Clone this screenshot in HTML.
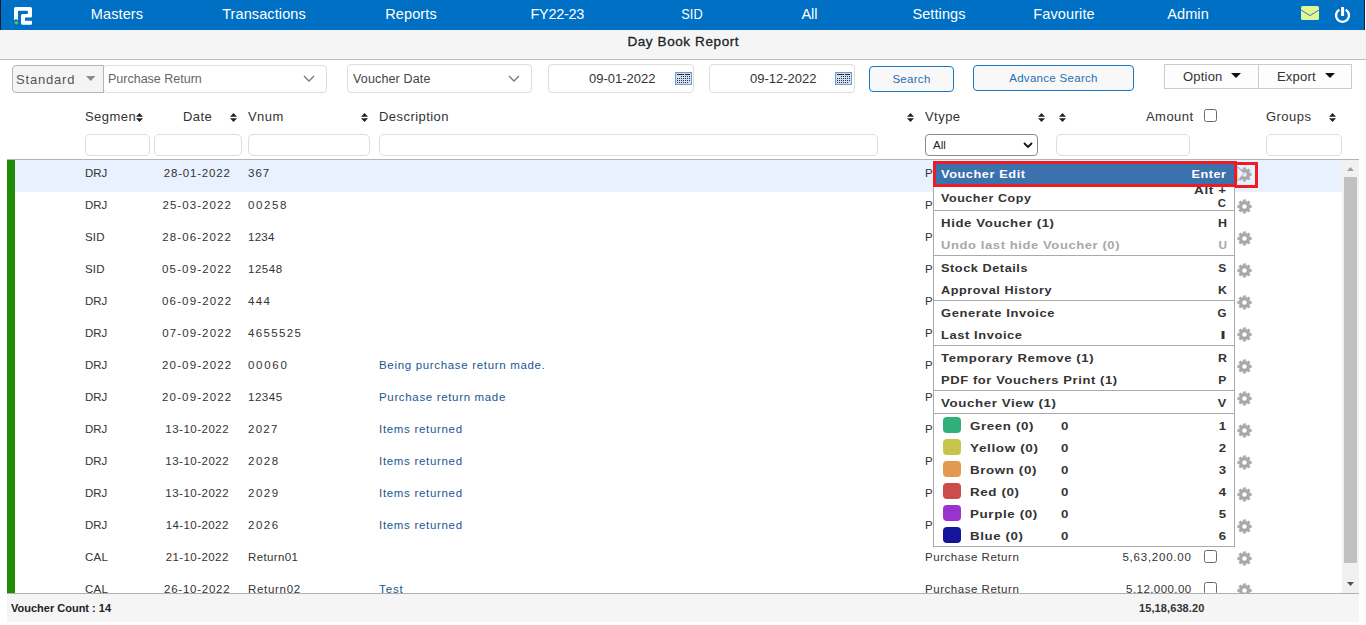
<!DOCTYPE html>
<html>
<head>
<meta charset="utf-8">
<title>Day Book Report</title>
<style>
*{box-sizing:border-box;margin:0;padding:0}
html,body{width:1366px;height:625px;overflow:hidden;background:#fff;font-family:"Liberation Sans",sans-serif;color:#333}
.abs{position:absolute}
#nav{position:absolute;left:0;top:0;width:1366px;height:30px;background:#0070c4}
#nav .edge{position:absolute;left:0;top:0;width:1px;height:30px;background:#1a1a2a}
#nav .item{position:absolute;top:6px;color:#fff;font-size:14.5px;line-height:17px;white-space:nowrap;transform:translateX(-50%);letter-spacing:.1px}
#title{position:absolute;left:0;top:30px;width:1366px;height:30px;background:#f5f5f5;border-bottom:1px solid #bdbdbd}
#title span{position:absolute;left:0;width:1366px;text-align:center;top:4px;font-size:13.5px;line-height:15px;font-weight:normal;color:#222;letter-spacing:.6px;-webkit-text-stroke:.3px #222;text-indent:.6px}
.box{position:absolute;border:1px solid #ddd;border-radius:4px;background:#fff}
.txt{position:absolute;white-space:nowrap;font-size:12.5px;line-height:15px;color:#444}
.hdr{position:absolute;top:109px;font-size:13px;line-height:15px;color:#333;white-space:nowrap;letter-spacing:.45px}
.sort{position:absolute;top:113px;width:7px;height:9px;margin-left:-.5px}
.finp{position:absolute;top:134px;height:22px;border:1px solid #ddd;border-radius:5px;background:#fff}
#grid{position:absolute;left:7px;top:159px;width:1352px;height:435px;overflow:hidden;border-top:1px solid #b4b4b4}
#grid .bar{position:absolute;left:0;top:0;width:8px;height:435px;background:#218a06}
.row{position:absolute;left:8px;width:1327px;height:32px}
.row.sel{background:#e9f1fe}
.c{position:absolute;top:6px;font-size:11.5px;line-height:14px;color:#333;white-space:nowrap}
.c.d{color:#1b5690}
.c.date{width:80px;text-align:center;text-indent:.4px}
.c.amt{text-align:right}
.cb{position:absolute;width:13px;height:13px;border:1px solid #6b6b6b;border-radius:2.5px;background:#fff}
.gear{position:absolute;width:15px;height:15px}
#foot{position:absolute;left:7px;top:593px;width:1352px;height:29px;background:#f5f5f5;border-top:1px solid #b0b0b0}
#foot span{position:absolute;top:8px;font-size:11px;line-height:13px;font-weight:bold;color:#333;white-space:nowrap}
#sb{position:absolute;left:1342px;top:160px;width:17px;height:433px;background:#f1f1f1}
#sb .th{position:absolute;left:2px;top:17px;width:13px;height:386px;background:#c1c1c1}
#menubox{position:absolute;left:933px;top:162px;width:302px;height:385px;background:#fff;border:1px solid #aaa}
#menu{position:absolute;left:0;top:0;font-weight:bold;font-size:11px;color:#333;letter-spacing:.5px}
#menu .mi{position:absolute;left:934px;width:300px;white-space:nowrap;line-height:14px}
#menu .mi .l{position:absolute;left:7px;top:5px;transform-origin:0 50%;display:inline-block}
#menu .mi .r{position:absolute;right:7px;top:5px;text-align:right;transform-origin:100% 50%;display:inline-block}
#menu .mi.sel{background:#3b71ad;color:#fff;left:936px;width:298px}
#menu .mi.sel .l{left:5px;top:3px}
#menu .mi.sel .r{top:3px}
#menu .mi.two .r{top:-3px;line-height:13px}
#menu .mi.two .r i{font-style:normal;display:inline-block;transform:scaleX(.84);transform-origin:100% 50%}
#menu .mi.two .l{top:4px}
#menu .mi.dis{color:#a8a8a8}
#menu .mi.col .l{left:36px}
#menu .sep{position:absolute;left:934px;width:300px;height:1px;background:#aaa}
#menu .sw{position:absolute;left:9px;top:3px;width:18px;height:16px;border-radius:4px}
#menu .n{position:absolute;left:127.3px;top:5px;transform-origin:0 50%;display:inline-block}
.redbox{position:absolute;border:2px solid #ec1c24}
</style>
</head>
<body>
<div id="nav">
  <div class="edge"></div><div class="edge" style="left:1364px;width:1px"></div><div class="edge" style="left:1365px;width:1px;background:#fff"></div>
  <svg class="abs" style="left:14px;top:7px" width="18" height="18" viewBox="0 0 18 18">
    <path d="M0 13.2 V1.5 Q0 0 1.5 0 H16.5 Q18 0 18 1.5 V9.2 Q18 10.6 16.6 10.6 H11 V13.8 H17 Q18 13.8 18 14.8 V16.8 Q18 17.8 17 17.8 H8.5 Q7 17.8 7 16.3 V8.5 Q7 6.9 8.7 6.9 H12.9 Q13.9 6.9 13.9 5.9 V4.8 Q13.9 3.8 12.9 3.8 H5 Q4 3.8 4 4.8 V13.2 L2 11.9 Z" fill="#fff"/>
    <circle cx="2.4" cy="15.8" r="1.75" fill="#3ed630"/>
  </svg>
  <div class="item" style="left:117px">Masters</div>
  <div class="item" style="left:264px">Transactions</div>
  <div class="item" style="left:411px">Reports</div>
  <div class="item" style="left:557.3px;letter-spacing:-.3px">FY22-23</div>
  <div class="item" style="left:692px;transform:translateX(-50%) scaleX(.88)">SID</div>
  <div class="item" style="left:809.4px;letter-spacing:-.15px">All</div>
  <div class="item" style="left:939px">Settings</div>
  <div class="item" style="left:1064px">Favourite</div>
  <div class="item" style="left:1188px">Admin</div>
  <svg class="abs" style="left:1301px;top:5.7px" width="18" height="14" viewBox="0 0 18 14">
    <rect x="0" y="0" width="18" height="14" rx="1.6" fill="#e0f794"/>
    <path d="M0 4 L9 9.6 L18 4" fill="none" stroke="#3066b8" stroke-width="0.9"/>
  </svg>
  <svg class="abs" style="left:1334px;top:6px" width="18" height="18" viewBox="0 0 18 18">
    <path d="M5.3 3.7 A6.5 6.5 0 1 0 11.7 3.7" fill="none" stroke="#fff" stroke-width="2.4"/>
    <rect x="7.1" y="1" width="3" height="9" fill="#fff"/>
  </svg>
</div>
<div id="title"><span>Day Book Report</span></div>

<!-- filter row -->
<div class="box" style="left:103px;top:65px;width:224px;height:28px"></div>
<div class="box" style="left:12px;top:65px;width:92px;height:28px;background:#f4f4f4;border-color:#b5b5b5;border-radius:4px 0 0 4px"></div>
<div class="txt" style="left:16px;top:72px;font-size:13px;letter-spacing:.8px;color:#555">Standard</div>
<svg class="abs" style="left:85.5px;top:76px" width="9.5" height="5"><path d="M0 0 H9.5 L4.75 5 Z" fill="#8a8a8a"/></svg>
<div class="txt" style="left:108px;top:72px;color:#666">Purchase Return</div>
<svg class="abs" style="left:303px;top:75px" width="12" height="8"><path d="M1 1 L6 6 L11 1" fill="none" stroke="#777" stroke-width="1.3"/></svg>

<div class="box" style="left:347px;top:64px;width:185px;height:29px"></div>
<div class="txt" style="left:353px;top:72px;color:#444;letter-spacing:.15px">Voucher Date</div>
<svg class="abs" style="left:508px;top:75px" width="12" height="8"><path d="M1 1 L6 6 L11 1" fill="none" stroke="#777" stroke-width="1.3"/></svg>

<div class="box" style="left:548px;top:64px;width:146px;height:29px"></div>
<div class="txt" style="left:589px;top:71px;font-size:13px;color:#333">09-01-2022</div>
<svg class="abs cal" style="left:675px;top:72px" shape-rendering="crispEdges" width="17" height="13" viewBox="0 0 17 13"><rect x=".5" y=".5" width="16" height="12" fill="#cfdef2" stroke="#6f9bd0"/><path d="M2 2.5H9M10 2.5H15" stroke="#2a2a2a" stroke-width="1"/><path d="M6 4.5H15M2 6.5H15M2 8.5H15M2 10.5H13" stroke="#333" stroke-width="1" stroke-dasharray="1 1"/></svg>

<div class="box" style="left:709px;top:64px;width:146px;height:29px"></div>
<div class="txt" style="left:750px;top:71px;font-size:13px;color:#333">09-12-2022</div>
<svg class="abs cal" style="left:835px;top:72px" shape-rendering="crispEdges" width="17" height="13" viewBox="0 0 17 13"><rect x=".5" y=".5" width="16" height="12" fill="#cfdef2" stroke="#6f9bd0"/><path d="M2 2.5H9M10 2.5H15" stroke="#2a2a2a" stroke-width="1"/><path d="M6 4.5H15M2 6.5H15M2 8.5H15M2 10.5H13" stroke="#333" stroke-width="1" stroke-dasharray="1 1"/></svg>

<div class="box" style="left:869px;top:66px;width:85px;height:26px;border-color:#1a78c2;background:#f8f8f8"></div>
<div class="txt" style="left:869px;top:72px;width:85px;text-align:center;font-size:11.5px;color:#1f6fb4;letter-spacing:.3px">Search</div>
<div class="box" style="left:973px;top:65px;width:161px;height:26px;border-color:#1a78c2;background:#f8f8f8"></div>
<div class="txt" style="left:973px;top:71px;width:161px;text-align:center;font-size:11.5px;color:#1f6fb4;letter-spacing:.3px">Advance Search</div>

<div class="box" style="left:1164px;top:64px;width:95px;height:25px;border-radius:0;border-color:#ccc;background:#fdfdfd"></div>
<div class="box" style="left:1258px;top:64px;width:94px;height:25px;border-radius:0;border-color:#ccc;background:#fdfdfd"></div>
<div class="txt" style="left:1183px;top:69px;font-size:13px;color:#333;letter-spacing:.2px">Option</div>
<svg class="abs" style="left:1231px;top:73px" width="10" height="5"><path d="M0 0 H10 L5 5 Z" fill="#111"/></svg>
<div class="txt" style="left:1277px;top:69px;font-size:13px;color:#333;letter-spacing:.2px">Export</div>
<svg class="abs" style="left:1325px;top:73px" width="10" height="5"><path d="M0 0 H10 L5 5 Z" fill="#111"/></svg>

<!-- header row -->
<div class="hdr" style="left:85px">Segmen</div>
<div class="hdr" style="left:183px">Date</div>
<div class="hdr" style="left:248px">Vnum</div>
<div class="hdr" style="left:379px">Description</div>
<div class="hdr" style="left:925px">Vtype</div>
<div class="hdr" style="left:1146px">Amount</div>
<div class="hdr" style="left:1266px">Groups</div>
<svg class="sort" style="left:136px" viewBox="0 0 7 9"><path d="M3.5 0 L7 3.8 H0 Z M0 5.2 H7 L3.5 9 Z" fill="#222"/></svg>
<svg class="sort" style="left:230px" viewBox="0 0 7 9"><path d="M3.5 0 L7 3.8 H0 Z M0 5.2 H7 L3.5 9 Z" fill="#222"/></svg>
<svg class="sort" style="left:361px" viewBox="0 0 7 9"><path d="M3.5 0 L7 3.8 H0 Z M0 5.2 H7 L3.5 9 Z" fill="#222"/></svg>
<svg class="sort" style="left:907px" viewBox="0 0 7 9"><path d="M3.5 0 L7 3.8 H0 Z M0 5.2 H7 L3.5 9 Z" fill="#222"/></svg>
<svg class="sort" style="left:1038px" viewBox="0 0 7 9"><path d="M3.5 0 L7 3.8 H0 Z M0 5.2 H7 L3.5 9 Z" fill="#222"/></svg>
<svg class="sort" style="left:1059px" viewBox="0 0 7 9"><path d="M3.5 0 L7 3.8 H0 Z M0 5.2 H7 L3.5 9 Z" fill="#222"/></svg>
<svg class="sort" style="left:1329px" viewBox="0 0 7 9"><path d="M3.5 0 L7 3.8 H0 Z M0 5.2 H7 L3.5 9 Z" fill="#222"/></svg>
<div class="cb" style="left:1204px;top:109px"></div>

<div class="finp" style="left:85px;width:65px"></div>
<div class="finp" style="left:154px;width:88px"></div>
<div class="finp" style="left:248px;width:122px"></div>
<div class="finp" style="left:379px;width:499px"></div>
<div class="finp" style="left:925px;width:113px;border-color:#8a8a8a;border-radius:4px"></div>
<div class="txt" style="left:933px;top:138px;font-size:11.5px;color:#222">All</div>
<svg class="abs" style="left:1023px;top:142px" width="10" height="7"><path d="M1 1 L5 5 L9 1" fill="none" stroke="#111" stroke-width="1.8"/></svg>
<div class="finp" style="left:1056px;width:134px"></div>
<div class="finp" style="left:1266px;width:76px"></div>

<!-- grid -->
<div id="grid">
  <div class="bar"></div>
  <div class="row sel" style="top:0px"><div class="c" style="left:70px;letter-spacing:-0.037px">DRJ</div><div class="c date" style="left:142px;letter-spacing:0.808px">28-01-2022</div><div class="c" style="left:233px;letter-spacing:1.006px">367</div><div class="c" style="left:910px">P</div></div>
  <div class="row" style="top:32px"><div class="c" style="left:70px;letter-spacing:-0.037px">DRJ</div><div class="c date" style="left:142px;letter-spacing:1.064px">25-03-2022</div><div class="c" style="left:233px;letter-spacing:1.579px">00258</div><div class="c" style="left:910px">P</div></div>
  <div class="row" style="top:64px"><div class="c" style="left:70px;letter-spacing:0.164px">SID</div><div class="c date" style="left:142px;letter-spacing:1.086px">28-06-2022</div><div class="c" style="left:233px;letter-spacing:0.235px">1234</div><div class="c" style="left:910px">P</div></div>
  <div class="row" style="top:96px"><div class="c" style="left:70px;letter-spacing:0.164px">SID</div><div class="c date" style="left:142px;letter-spacing:1.141px">05-09-2022</div><div class="c" style="left:233px;letter-spacing:0.529px">12548</div><div class="c" style="left:910px">P</div></div>
  <div class="row" style="top:128px"><div class="c" style="left:70px;letter-spacing:-0.037px">DRJ</div><div class="c date" style="left:142px;letter-spacing:1.141px">06-09-2022</div><div class="c" style="left:233px;letter-spacing:1.306px">444</div><div class="c" style="left:910px">P</div></div>
  <div class="row" style="top:160px"><div class="c" style="left:70px;letter-spacing:-0.037px">DRJ</div><div class="c date" style="left:142px;letter-spacing:1.108px">07-09-2022</div><div class="c" style="left:233px;letter-spacing:1.336px">4655525</div><div class="c" style="left:910px">P</div></div>
  <div class="row" style="top:192px"><div class="c" style="left:70px;letter-spacing:-0.037px">DRJ</div><div class="c date" style="left:142px;letter-spacing:1.141px">20-09-2022</div><div class="c" style="left:233px;letter-spacing:1.704px">00060</div><div class="c d" style="left:364px;letter-spacing:0.673px">Being purchase return made.</div><div class="c" style="left:910px">P</div></div>
  <div class="row" style="top:224px"><div class="c" style="left:70px;letter-spacing:-0.037px">DRJ</div><div class="c date" style="left:142px;letter-spacing:1.141px">20-09-2022</div><div class="c" style="left:233px;letter-spacing:0.529px">12345</div><div class="c d" style="left:364px;letter-spacing:0.658px">Purchase return made</div><div class="c" style="left:910px">P</div></div>
  <div class="row" style="top:256px"><div class="c" style="left:70px;letter-spacing:-0.037px">DRJ</div><div class="c date" style="left:142px;letter-spacing:0.497px">13-10-2022</div><div class="c" style="left:233px;letter-spacing:1.269px">2027</div><div class="c d" style="left:364px;letter-spacing:0.688px">Items returned</div><div class="c" style="left:910px">P</div></div>
  <div class="row" style="top:288px"><div class="c" style="left:70px;letter-spacing:-0.037px">DRJ</div><div class="c date" style="left:142px;letter-spacing:0.497px">13-10-2022</div><div class="c" style="left:233px;letter-spacing:1.502px">2028</div><div class="c d" style="left:364px;letter-spacing:0.688px">Items returned</div><div class="c" style="left:910px">P</div></div>
  <div class="row" style="top:320px"><div class="c" style="left:70px;letter-spacing:-0.037px">DRJ</div><div class="c date" style="left:142px;letter-spacing:0.497px">13-10-2022</div><div class="c" style="left:233px;letter-spacing:1.502px">2029</div><div class="c d" style="left:364px;letter-spacing:0.688px">Items returned</div><div class="c" style="left:910px">P</div></div>
  <div class="row" style="top:352px"><div class="c" style="left:70px;letter-spacing:-0.037px">DRJ</div><div class="c date" style="left:142px;letter-spacing:0.43px">14-10-2022</div><div class="c" style="left:233px;letter-spacing:1.502px">2026</div><div class="c d" style="left:364px;letter-spacing:0.688px">Items returned</div><div class="c" style="left:910px">P</div></div>
  <div class="row" style="top:384px"><div class="c" style="left:70px;letter-spacing:0.263px">CAL</div><div class="c date" style="left:142px;letter-spacing:0.43px">21-10-2022</div><div class="c" style="left:233px;letter-spacing:0.355px">Return01</div><div class="c" style="left:910px;letter-spacing:0.536px">Purchase Return</div><div class="c amt" style="right:150.4px;letter-spacing:0.763px">5,63,200.00</div><div class="cb" style="left:1189px;top:6px"></div></div>
  <div class="row" style="top:416px"><div class="c" style="left:70px;letter-spacing:0.263px">CAL</div><div class="c date" style="left:142px;letter-spacing:0.752px">26-10-2022</div><div class="c" style="left:233px;letter-spacing:0.698px">Return02</div><div class="c d" style="left:364px;letter-spacing:0.902px">Test</div><div class="c" style="left:910px;letter-spacing:0.536px">Purchase Return</div><div class="c amt" style="right:150.4px;letter-spacing:0.433px">5,12,000.00</div><div class="cb" style="left:1189px;top:6px"></div></div>
</div>

<!-- scrollbar -->
<div id="sb"><div class="th"></div>
<svg class="abs" style="left:5px;top:7px" width="7" height="4"><path d="M0 4 L3.5 0 L7 4 Z" fill="#a3a3a3"/></svg>
<svg class="abs" style="left:5px;top:422px" width="7" height="4"><path d="M0 0 H7 L3.5 4 Z" fill="#505050"/></svg>
</div>

<div id="foot"><span style="left:4px;color:#222">Voucher Count : 14</span><span style="left:1132px;color:#333;letter-spacing:.1px">15,18,638.20</span></div>

<!-- gears -->

<!-- context menu -->
<div class="abs" style="left:0;top:160px;width:1342px;height:433px;overflow:hidden">
<svg class="gear" style="left:1237.4px;top:6.7px" viewBox="0 0 16 16"><path d="M6.61 2.57 L6.75 0.71 L9.25 0.71 L9.39 2.57 L10.86 3.18 L12.27 1.96 L14.04 3.73 L12.82 5.14 L13.43 6.61 L15.29 6.75 L15.29 9.25 L13.43 9.39 L12.82 10.86 L14.04 12.27 L12.27 14.04 L10.86 12.82 L9.39 13.43 L9.25 15.29 L6.75 15.29 L6.61 13.43 L5.14 12.82 L3.73 14.04 L1.96 12.27 L3.18 10.86 L2.57 9.39 L0.71 9.25 L0.71 6.75 L2.57 6.61 L3.18 5.14 L1.96 3.73 L3.73 1.96 L5.14 3.18 Z M5.30 8.00 A2.7 2.7 0 1 0 10.70 8.00 A2.7 2.7 0 1 0 5.30 8.00 Z" fill="#a8a8a8" fill-rule="evenodd" stroke="#a8a8a8" stroke-width="0.6" stroke-linejoin="round"/></svg>
<svg class="gear" style="left:1237.4px;top:38.7px" viewBox="0 0 16 16"><path d="M6.61 2.57 L6.75 0.71 L9.25 0.71 L9.39 2.57 L10.86 3.18 L12.27 1.96 L14.04 3.73 L12.82 5.14 L13.43 6.61 L15.29 6.75 L15.29 9.25 L13.43 9.39 L12.82 10.86 L14.04 12.27 L12.27 14.04 L10.86 12.82 L9.39 13.43 L9.25 15.29 L6.75 15.29 L6.61 13.43 L5.14 12.82 L3.73 14.04 L1.96 12.27 L3.18 10.86 L2.57 9.39 L0.71 9.25 L0.71 6.75 L2.57 6.61 L3.18 5.14 L1.96 3.73 L3.73 1.96 L5.14 3.18 Z M5.30 8.00 A2.7 2.7 0 1 0 10.70 8.00 A2.7 2.7 0 1 0 5.30 8.00 Z" fill="#a8a8a8" fill-rule="evenodd" stroke="#a8a8a8" stroke-width="0.6" stroke-linejoin="round"/></svg>
<svg class="gear" style="left:1237.4px;top:70.7px" viewBox="0 0 16 16"><path d="M6.61 2.57 L6.75 0.71 L9.25 0.71 L9.39 2.57 L10.86 3.18 L12.27 1.96 L14.04 3.73 L12.82 5.14 L13.43 6.61 L15.29 6.75 L15.29 9.25 L13.43 9.39 L12.82 10.86 L14.04 12.27 L12.27 14.04 L10.86 12.82 L9.39 13.43 L9.25 15.29 L6.75 15.29 L6.61 13.43 L5.14 12.82 L3.73 14.04 L1.96 12.27 L3.18 10.86 L2.57 9.39 L0.71 9.25 L0.71 6.75 L2.57 6.61 L3.18 5.14 L1.96 3.73 L3.73 1.96 L5.14 3.18 Z M5.30 8.00 A2.7 2.7 0 1 0 10.70 8.00 A2.7 2.7 0 1 0 5.30 8.00 Z" fill="#a8a8a8" fill-rule="evenodd" stroke="#a8a8a8" stroke-width="0.6" stroke-linejoin="round"/></svg>
<svg class="gear" style="left:1237.4px;top:102.7px" viewBox="0 0 16 16"><path d="M6.61 2.57 L6.75 0.71 L9.25 0.71 L9.39 2.57 L10.86 3.18 L12.27 1.96 L14.04 3.73 L12.82 5.14 L13.43 6.61 L15.29 6.75 L15.29 9.25 L13.43 9.39 L12.82 10.86 L14.04 12.27 L12.27 14.04 L10.86 12.82 L9.39 13.43 L9.25 15.29 L6.75 15.29 L6.61 13.43 L5.14 12.82 L3.73 14.04 L1.96 12.27 L3.18 10.86 L2.57 9.39 L0.71 9.25 L0.71 6.75 L2.57 6.61 L3.18 5.14 L1.96 3.73 L3.73 1.96 L5.14 3.18 Z M5.30 8.00 A2.7 2.7 0 1 0 10.70 8.00 A2.7 2.7 0 1 0 5.30 8.00 Z" fill="#a8a8a8" fill-rule="evenodd" stroke="#a8a8a8" stroke-width="0.6" stroke-linejoin="round"/></svg>
<svg class="gear" style="left:1237.4px;top:134.7px" viewBox="0 0 16 16"><path d="M6.61 2.57 L6.75 0.71 L9.25 0.71 L9.39 2.57 L10.86 3.18 L12.27 1.96 L14.04 3.73 L12.82 5.14 L13.43 6.61 L15.29 6.75 L15.29 9.25 L13.43 9.39 L12.82 10.86 L14.04 12.27 L12.27 14.04 L10.86 12.82 L9.39 13.43 L9.25 15.29 L6.75 15.29 L6.61 13.43 L5.14 12.82 L3.73 14.04 L1.96 12.27 L3.18 10.86 L2.57 9.39 L0.71 9.25 L0.71 6.75 L2.57 6.61 L3.18 5.14 L1.96 3.73 L3.73 1.96 L5.14 3.18 Z M5.30 8.00 A2.7 2.7 0 1 0 10.70 8.00 A2.7 2.7 0 1 0 5.30 8.00 Z" fill="#a8a8a8" fill-rule="evenodd" stroke="#a8a8a8" stroke-width="0.6" stroke-linejoin="round"/></svg>
<svg class="gear" style="left:1237.4px;top:166.7px" viewBox="0 0 16 16"><path d="M6.61 2.57 L6.75 0.71 L9.25 0.71 L9.39 2.57 L10.86 3.18 L12.27 1.96 L14.04 3.73 L12.82 5.14 L13.43 6.61 L15.29 6.75 L15.29 9.25 L13.43 9.39 L12.82 10.86 L14.04 12.27 L12.27 14.04 L10.86 12.82 L9.39 13.43 L9.25 15.29 L6.75 15.29 L6.61 13.43 L5.14 12.82 L3.73 14.04 L1.96 12.27 L3.18 10.86 L2.57 9.39 L0.71 9.25 L0.71 6.75 L2.57 6.61 L3.18 5.14 L1.96 3.73 L3.73 1.96 L5.14 3.18 Z M5.30 8.00 A2.7 2.7 0 1 0 10.70 8.00 A2.7 2.7 0 1 0 5.30 8.00 Z" fill="#a8a8a8" fill-rule="evenodd" stroke="#a8a8a8" stroke-width="0.6" stroke-linejoin="round"/></svg>
<svg class="gear" style="left:1237.4px;top:198.7px" viewBox="0 0 16 16"><path d="M6.61 2.57 L6.75 0.71 L9.25 0.71 L9.39 2.57 L10.86 3.18 L12.27 1.96 L14.04 3.73 L12.82 5.14 L13.43 6.61 L15.29 6.75 L15.29 9.25 L13.43 9.39 L12.82 10.86 L14.04 12.27 L12.27 14.04 L10.86 12.82 L9.39 13.43 L9.25 15.29 L6.75 15.29 L6.61 13.43 L5.14 12.82 L3.73 14.04 L1.96 12.27 L3.18 10.86 L2.57 9.39 L0.71 9.25 L0.71 6.75 L2.57 6.61 L3.18 5.14 L1.96 3.73 L3.73 1.96 L5.14 3.18 Z M5.30 8.00 A2.7 2.7 0 1 0 10.70 8.00 A2.7 2.7 0 1 0 5.30 8.00 Z" fill="#a8a8a8" fill-rule="evenodd" stroke="#a8a8a8" stroke-width="0.6" stroke-linejoin="round"/></svg>
<svg class="gear" style="left:1237.4px;top:230.7px" viewBox="0 0 16 16"><path d="M6.61 2.57 L6.75 0.71 L9.25 0.71 L9.39 2.57 L10.86 3.18 L12.27 1.96 L14.04 3.73 L12.82 5.14 L13.43 6.61 L15.29 6.75 L15.29 9.25 L13.43 9.39 L12.82 10.86 L14.04 12.27 L12.27 14.04 L10.86 12.82 L9.39 13.43 L9.25 15.29 L6.75 15.29 L6.61 13.43 L5.14 12.82 L3.73 14.04 L1.96 12.27 L3.18 10.86 L2.57 9.39 L0.71 9.25 L0.71 6.75 L2.57 6.61 L3.18 5.14 L1.96 3.73 L3.73 1.96 L5.14 3.18 Z M5.30 8.00 A2.7 2.7 0 1 0 10.70 8.00 A2.7 2.7 0 1 0 5.30 8.00 Z" fill="#a8a8a8" fill-rule="evenodd" stroke="#a8a8a8" stroke-width="0.6" stroke-linejoin="round"/></svg>
<svg class="gear" style="left:1237.4px;top:262.7px" viewBox="0 0 16 16"><path d="M6.61 2.57 L6.75 0.71 L9.25 0.71 L9.39 2.57 L10.86 3.18 L12.27 1.96 L14.04 3.73 L12.82 5.14 L13.43 6.61 L15.29 6.75 L15.29 9.25 L13.43 9.39 L12.82 10.86 L14.04 12.27 L12.27 14.04 L10.86 12.82 L9.39 13.43 L9.25 15.29 L6.75 15.29 L6.61 13.43 L5.14 12.82 L3.73 14.04 L1.96 12.27 L3.18 10.86 L2.57 9.39 L0.71 9.25 L0.71 6.75 L2.57 6.61 L3.18 5.14 L1.96 3.73 L3.73 1.96 L5.14 3.18 Z M5.30 8.00 A2.7 2.7 0 1 0 10.70 8.00 A2.7 2.7 0 1 0 5.30 8.00 Z" fill="#a8a8a8" fill-rule="evenodd" stroke="#a8a8a8" stroke-width="0.6" stroke-linejoin="round"/></svg>
<svg class="gear" style="left:1237.4px;top:294.7px" viewBox="0 0 16 16"><path d="M6.61 2.57 L6.75 0.71 L9.25 0.71 L9.39 2.57 L10.86 3.18 L12.27 1.96 L14.04 3.73 L12.82 5.14 L13.43 6.61 L15.29 6.75 L15.29 9.25 L13.43 9.39 L12.82 10.86 L14.04 12.27 L12.27 14.04 L10.86 12.82 L9.39 13.43 L9.25 15.29 L6.75 15.29 L6.61 13.43 L5.14 12.82 L3.73 14.04 L1.96 12.27 L3.18 10.86 L2.57 9.39 L0.71 9.25 L0.71 6.75 L2.57 6.61 L3.18 5.14 L1.96 3.73 L3.73 1.96 L5.14 3.18 Z M5.30 8.00 A2.7 2.7 0 1 0 10.70 8.00 A2.7 2.7 0 1 0 5.30 8.00 Z" fill="#a8a8a8" fill-rule="evenodd" stroke="#a8a8a8" stroke-width="0.6" stroke-linejoin="round"/></svg>
<svg class="gear" style="left:1237.4px;top:326.7px" viewBox="0 0 16 16"><path d="M6.61 2.57 L6.75 0.71 L9.25 0.71 L9.39 2.57 L10.86 3.18 L12.27 1.96 L14.04 3.73 L12.82 5.14 L13.43 6.61 L15.29 6.75 L15.29 9.25 L13.43 9.39 L12.82 10.86 L14.04 12.27 L12.27 14.04 L10.86 12.82 L9.39 13.43 L9.25 15.29 L6.75 15.29 L6.61 13.43 L5.14 12.82 L3.73 14.04 L1.96 12.27 L3.18 10.86 L2.57 9.39 L0.71 9.25 L0.71 6.75 L2.57 6.61 L3.18 5.14 L1.96 3.73 L3.73 1.96 L5.14 3.18 Z M5.30 8.00 A2.7 2.7 0 1 0 10.70 8.00 A2.7 2.7 0 1 0 5.30 8.00 Z" fill="#a8a8a8" fill-rule="evenodd" stroke="#a8a8a8" stroke-width="0.6" stroke-linejoin="round"/></svg>
<svg class="gear" style="left:1237.4px;top:358.7px" viewBox="0 0 16 16"><path d="M6.61 2.57 L6.75 0.71 L9.25 0.71 L9.39 2.57 L10.86 3.18 L12.27 1.96 L14.04 3.73 L12.82 5.14 L13.43 6.61 L15.29 6.75 L15.29 9.25 L13.43 9.39 L12.82 10.86 L14.04 12.27 L12.27 14.04 L10.86 12.82 L9.39 13.43 L9.25 15.29 L6.75 15.29 L6.61 13.43 L5.14 12.82 L3.73 14.04 L1.96 12.27 L3.18 10.86 L2.57 9.39 L0.71 9.25 L0.71 6.75 L2.57 6.61 L3.18 5.14 L1.96 3.73 L3.73 1.96 L5.14 3.18 Z M5.30 8.00 A2.7 2.7 0 1 0 10.70 8.00 A2.7 2.7 0 1 0 5.30 8.00 Z" fill="#a8a8a8" fill-rule="evenodd" stroke="#a8a8a8" stroke-width="0.6" stroke-linejoin="round"/></svg>
<svg class="gear" style="left:1237.4px;top:390.7px" viewBox="0 0 16 16"><path d="M6.61 2.57 L6.75 0.71 L9.25 0.71 L9.39 2.57 L10.86 3.18 L12.27 1.96 L14.04 3.73 L12.82 5.14 L13.43 6.61 L15.29 6.75 L15.29 9.25 L13.43 9.39 L12.82 10.86 L14.04 12.27 L12.27 14.04 L10.86 12.82 L9.39 13.43 L9.25 15.29 L6.75 15.29 L6.61 13.43 L5.14 12.82 L3.73 14.04 L1.96 12.27 L3.18 10.86 L2.57 9.39 L0.71 9.25 L0.71 6.75 L2.57 6.61 L3.18 5.14 L1.96 3.73 L3.73 1.96 L5.14 3.18 Z M5.30 8.00 A2.7 2.7 0 1 0 10.70 8.00 A2.7 2.7 0 1 0 5.30 8.00 Z" fill="#a8a8a8" fill-rule="evenodd" stroke="#a8a8a8" stroke-width="0.6" stroke-linejoin="round"/></svg>
<svg class="gear" style="left:1237.4px;top:422.7px" viewBox="0 0 16 16"><path d="M6.61 2.57 L6.75 0.71 L9.25 0.71 L9.39 2.57 L10.86 3.18 L12.27 1.96 L14.04 3.73 L12.82 5.14 L13.43 6.61 L15.29 6.75 L15.29 9.25 L13.43 9.39 L12.82 10.86 L14.04 12.27 L12.27 14.04 L10.86 12.82 L9.39 13.43 L9.25 15.29 L6.75 15.29 L6.61 13.43 L5.14 12.82 L3.73 14.04 L1.96 12.27 L3.18 10.86 L2.57 9.39 L0.71 9.25 L0.71 6.75 L2.57 6.61 L3.18 5.14 L1.96 3.73 L3.73 1.96 L5.14 3.18 Z M5.30 8.00 A2.7 2.7 0 1 0 10.70 8.00 A2.7 2.7 0 1 0 5.30 8.00 Z" fill="#a8a8a8" fill-rule="evenodd" stroke="#a8a8a8" stroke-width="0.6" stroke-linejoin="round"/></svg>
</div>
<svg class="abs" style="left:1236px;top:165px" width="10" height="18" viewBox="0 0 10 18"><path d="M1 1 L8 8.5 L1 16.5 Z" fill="#eef1f8" stroke="#a9a9a9" stroke-width="1"/></svg>
<div id="menubox"></div>
<div id="menu">
<div class="mi sel" style="top:164px;height:20px"><span class="l" style="transform:scaleX(1.158)">Voucher Edit</span><span class="r" style="transform:scaleX(1.149)">Enter</span></div>
<div class="mi two" style="top:187px;height:23px"><span class="l" style="transform:scaleX(1.135)">Voucher Copy</span><span class="r" style="transform:scaleX(1.223)">Alt +<br><i>C</i></span></div>
<div class="mi " style="top:211px;height:22px"><span class="l" style="transform:scaleX(1.201)">Hide Voucher (1)</span><span class="r" style="transform:scaleX(1.132)">H</span></div>
<div class="mi dis" style="top:233px;height:22px"><span class="l" style="transform:scaleX(1.182)">Undo last hide Voucher (0)</span><span class="r" style="transform:scaleX(1.069)">U</span></div>
<div class="mi " style="top:256px;height:22px"><span class="l" style="transform:scaleX(1.152)">Stock Details</span><span class="r" style="transform:scaleX(1.089)">S</span></div>
<div class="mi " style="top:278px;height:22px"><span class="l" style="transform:scaleX(1.149)">Approval History</span><span class="r" style="transform:scaleX(1.132)">K</span></div>
<div class="mi " style="top:301px;height:22px"><span class="l" style="transform:scaleX(1.181)">Generate Invoice</span><span class="r" style="transform:scaleX(1.051)">G</span></div>
<div class="mi " style="top:323px;height:22px"><span class="l" style="transform:scaleX(1.173)">Last Invoice</span><span class="r" style="transform:scaleX(1.796)">I</span></div>
<div class="mi " style="top:346px;height:22px"><span class="l" style="transform:scaleX(1.193)">Temporary Remove (1)</span><span class="r" style="transform:scaleX(1.132)">R</span></div>
<div class="mi " style="top:368px;height:22px"><span class="l" style="transform:scaleX(1.180)">PDF for Vouchers Print (1)</span><span class="r" style="transform:scaleX(1.089)">P</span></div>
<div class="mi " style="top:391px;height:22px"><span class="l" style="transform:scaleX(1.209)">Voucher View (1)</span><span class="r" style="transform:scaleX(1.157)">V</span></div>
<div class="sep" style="top:210px"></div>
<div class="sep" style="top:255px"></div>
<div class="sep" style="top:300px"></div>
<div class="sep" style="top:345px"></div>
<div class="sep" style="top:390px"></div>
<div class="sep" style="top:413px"></div>
<div class="mi col" style="top:414px;height:22px"><span class="sw" style="background:#2fb07a"></span><span class="l" style="transform:scaleX(1.214)">Green (0)</span><span class="n" style="transform:scaleX(1.2)">0</span><span class="r" style="transform:scaleX(1.2)">1</span></div>
<div class="mi col" style="top:436px;height:22px"><span class="sw" style="background:#c6c44a"></span><span class="l" style="transform:scaleX(1.231)">Yellow (0)</span><span class="n" style="transform:scaleX(1.2)">0</span><span class="r" style="transform:scaleX(1.2)">2</span></div>
<div class="mi col" style="top:458px;height:22px"><span class="sw" style="background:#e39a50"></span><span class="l" style="transform:scaleX(1.213)">Brown (0)</span><span class="n" style="transform:scaleX(1.2)">0</span><span class="r" style="transform:scaleX(1.2)">3</span></div>
<div class="mi col" style="top:480px;height:22px"><span class="sw" style="background:#cc4c4c"></span><span class="l" style="transform:scaleX(1.216)">Red (0)</span><span class="n" style="transform:scaleX(1.2)">0</span><span class="r" style="transform:scaleX(1.2)">4</span></div>
<div class="mi col" style="top:502px;height:22px"><span class="sw" style="background:#9a32cd"></span><span class="l" style="transform:scaleX(1.217)">Purple (0)</span><span class="n" style="transform:scaleX(1.2)">0</span><span class="r" style="transform:scaleX(1.2)">5</span></div>
<div class="mi col" style="top:524px;height:22px"><span class="sw" style="background:#15159c"></span><span class="l" style="transform:scaleX(1.209)">Blue (0)</span><span class="n" style="transform:scaleX(1.2)">0</span><span class="r" style="transform:scaleX(1.2)">6</span></div>
</div>
<div class="redbox" style="left:933px;top:161px;width:304px;height:26px;border-width:3px"></div>
<div class="redbox" style="left:1235px;top:162px;width:23px;height:25.5px;border-width:3px 3px 3px 2px"></div>
</body>
</html>
